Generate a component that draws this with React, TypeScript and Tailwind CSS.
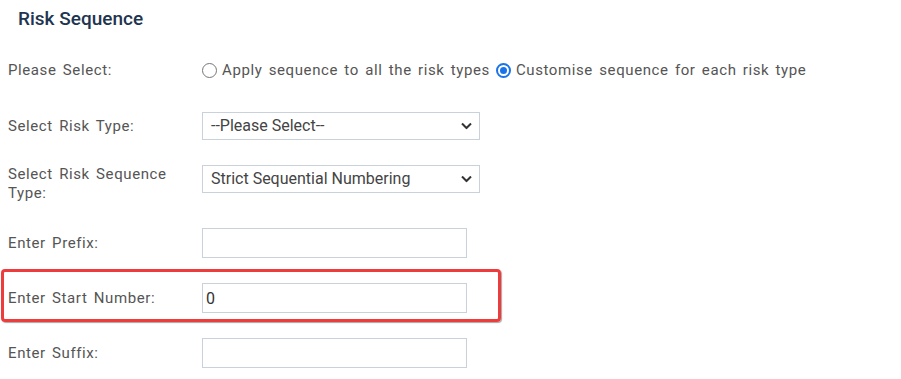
import React from "react";

function Chevron() {
  return (
    <svg width="11" height="7" viewBox="0 0 11 7" className="absolute right-[7px] top-1/2 -translate-y-1/2">
      <path d="M1 1 L5.5 5.5 L10 1" fill="none" stroke="#333" strokeWidth="2" />
    </svg>
  );
}

function SelectBox({ value }: { value: string }) {
  return (
    <div className="relative w-[278px] h-[28px] border border-[#c9d2db] bg-white flex items-center pl-[8px] text-[16px] text-[#444]">
      {value}
      <Chevron />
    </div>
  );
}

function Input({ value }: { value?: string }) {
  return (
    <div className="w-[265px] h-[30px] border border-[#c9d2db] bg-white flex items-center pl-[3px] pt-[2px] text-[16px] text-[#333]">
      {value}
    </div>
  );
}

function Label({ children }: { children: React.ReactNode }) {
  return <div className="w-[194px] text-[15px] leading-[19px] text-[#555] tracking-[0.6px] [word-spacing:2px]">{children}</div>;
}

export default function App() {
  return (
    <div className="w-[901px] h-[379px] bg-white overflow-hidden" style={{ fontFamily: "Roboto, 'Noto Sans', sans-serif" }}>
      <div className="pl-[18px] pt-[6px] h-[31px] text-[19px] leading-[25px] font-medium text-[#1e3550]">Risk Sequence</div>
      <div className="pl-[8px] mt-[29px] h-[20px] flex items-center">
        <Label>Please Select:</Label>
        <div className="flex items-center text-[15px] text-[#555] tracking-[0.6px] [word-spacing:2px]">
          <span className="w-[15px] h-[15px] rounded-full border border-[#767676] bg-white mr-[5px]" />
          <span>Apply sequence to all the risk types</span>
          <span className="ml-[6px] w-[15px] h-[15px] rounded-full border-[2px] border-[#1a73e8] bg-white flex items-center justify-center mr-[5px]">
            <span className="w-[7px] h-[7px] rounded-full bg-[#1a73e8]" />
          </span>
          <span>Customise sequence for each risk type</span>
        </div>
      </div>
      <div className="pl-[8px] mt-[32px] h-[28px] flex items-center">
        <Label>Select Risk Type:</Label>
        <SelectBox value="--Please Select--" />
      </div>
      <div className="pl-[8px] mt-[25px] h-[38px] flex items-start">
        <Label>Select Risk Sequence<br />Type:</Label>
        <SelectBox value="Strict Sequential Numbering" />
      </div>
      <div className="pl-[8px] mt-[25px] h-[30px] flex items-center">
        <Label>Enter Prefix:</Label>
        <Input />
      </div>
      <div className="ml-[1px] mt-[11px] w-[500px] h-[53px] border-[3px] border-[#ee3b3b] rounded-[4px] shadow-[1px_1px_1px_rgba(0,0,0,0.35)] pl-[4px] pt-[11px]">
        <div className="h-[30px] flex items-center">
          <Label>Enter Start Number:</Label>
          <Input value="0" />
        </div>
      </div>
      <div className="pl-[8px] mt-[16px] h-[30px] flex items-center">
        <Label>Enter Suffix:</Label>
        <Input />
      </div>
    </div>
  );
}
